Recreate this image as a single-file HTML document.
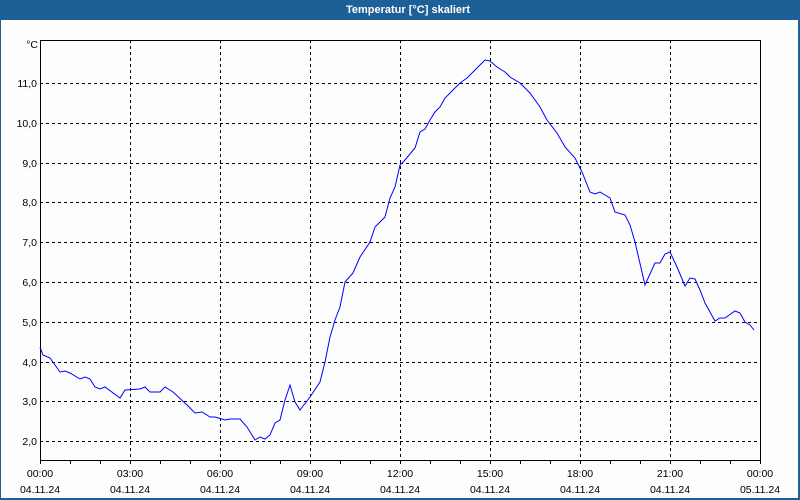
<!DOCTYPE html>
<html><head><meta charset="utf-8"><style>
html,body{margin:0;padding:0;width:800px;height:500px;overflow:hidden;background:#fdfefd}
</style></head><body>
<svg width="800" height="500" xmlns="http://www.w3.org/2000/svg" style="display:block;font-family:'Liberation Sans',sans-serif">
<rect x="0" y="0" width="800" height="500" fill="#fcfdfc"/>
<rect x="0" y="0" width="800" height="20" fill="#1d5f97"/>
<rect x="0" y="0" width="1" height="500" fill="#1d5f97"/>
<rect x="798" y="0" width="2" height="500" fill="#1d5f97"/>
<rect x="0" y="498" width="800" height="2" fill="#1d5f97"/>
<text x="408" y="13" fill="#fff" font-size="11" font-weight="bold" text-anchor="middle">Temperatur [°C] skaliert</text>
<g stroke="#000" stroke-width="1" stroke-dasharray="3,3" shape-rendering="crispEdges">
<line x1="130.5" y1="40" x2="130.5" y2="460"/><line x1="220.5" y1="40" x2="220.5" y2="460"/><line x1="310.5" y1="40" x2="310.5" y2="460"/><line x1="400.5" y1="40" x2="400.5" y2="460"/><line x1="490.5" y1="40" x2="490.5" y2="460"/><line x1="580.5" y1="40" x2="580.5" y2="460"/><line x1="670.5" y1="40" x2="670.5" y2="460"/>
<line x1="40" y1="83.5" x2="760" y2="83.5"/><line x1="40" y1="123.5" x2="760" y2="123.5"/><line x1="40" y1="163.5" x2="760" y2="163.5"/><line x1="40" y1="202.5" x2="760" y2="202.5"/><line x1="40" y1="242.5" x2="760" y2="242.5"/><line x1="40" y1="282.5" x2="760" y2="282.5"/><line x1="40" y1="322.5" x2="760" y2="322.5"/><line x1="40" y1="362.5" x2="760" y2="362.5"/><line x1="40" y1="401.5" x2="760" y2="401.5"/><line x1="40" y1="441.5" x2="760" y2="441.5"/>
</g>
<g stroke="#000" stroke-width="1" shape-rendering="crispEdges" fill="none">
<rect x="40.5" y="40.5" width="720" height="420"/>
<path d="M70.5 460v4M100.5 460v4M130.5 460v4M160.5 460v4M190.5 460v4M220.5 460v4M250.5 460v4M280.5 460v4M310.5 460v4M340.5 460v4M370.5 460v4M400.5 460v4M430.5 460v4M460.5 460v4M490.5 460v4M520.5 460v4M550.5 460v4M580.5 460v4M610.5 460v4M640.5 460v4M670.5 460v4M700.5 460v4M730.5 460v4M760.5 460v4M40.5 460v4"/>
</g>
<polyline fill="none" stroke="#0000ff" stroke-width="1" points="40,347 43,355 50,358 55,365 60,372 65,371 70,373 80,379 85,377 90,379 95,387 100,389 105,387 120,398 125,390 140,389 145,387 150,392 160,392 165,387 173,392 187,405 195,413 202,412 210,417 215,417 225,420 230,419 240,419 247,427 255,440 260,437 265,439 270,435 275,423 280,420 285,400 290,385 295,402 300,410 310,397 320,382 325,362 330,337 335,320 340,307 345,282 353,273 360,257 370,242 375,227 385,217 390,198 395,187 400,165 405,160 415,148 420,132 425,129 430,120 435,112 440,107 445,98 453,90 460,83 467,78 473,72 485,60 490,61 497,67 505,72 510,77 520,83 530,93 540,107 547,120 557,133 565,147 575,158 582,172 590,192 595,194 600,192 610,198 615,212 625,215 630,225 635,242 645,285 655,263 660,263 665,254 670,252 677,267 685,286 690,278 695,279 700,290 705,303 715,321 720,318 725,318 735,311 740,313 745,322 750,325 754,330"/>
<g font-size="10.5" fill="#000" text-anchor="end">
<text x="38" y="48">°C</text>
<text x="37" y="87">11,0</text><text x="37" y="127">10,0</text><text x="37" y="167">9,0</text><text x="37" y="206">8,0</text><text x="37" y="246">7,0</text><text x="37" y="286">6,0</text><text x="37" y="326">5,0</text><text x="37" y="366">4,0</text><text x="37" y="405">3,0</text><text x="37" y="445">2,0</text>
</g>
<g font-size="10.5" fill="#000" text-anchor="middle">
<text x="40" y="477">00:00</text><text x="130" y="477">03:00</text><text x="220" y="477">06:00</text><text x="310" y="477">09:00</text><text x="400" y="477">12:00</text><text x="490" y="477">15:00</text><text x="580" y="477">18:00</text><text x="670" y="477">21:00</text><text x="760" y="477">00:00</text>
<text x="40" y="493">04.11.24</text><text x="130" y="493">04.11.24</text><text x="220" y="493">04.11.24</text><text x="310" y="493">04.11.24</text><text x="400" y="493">04.11.24</text><text x="490" y="493">04.11.24</text><text x="580" y="493">04.11.24</text><text x="670" y="493">04.11.24</text><text x="760" y="493">05.11.24</text>
</g>
</svg>
</body></html>
